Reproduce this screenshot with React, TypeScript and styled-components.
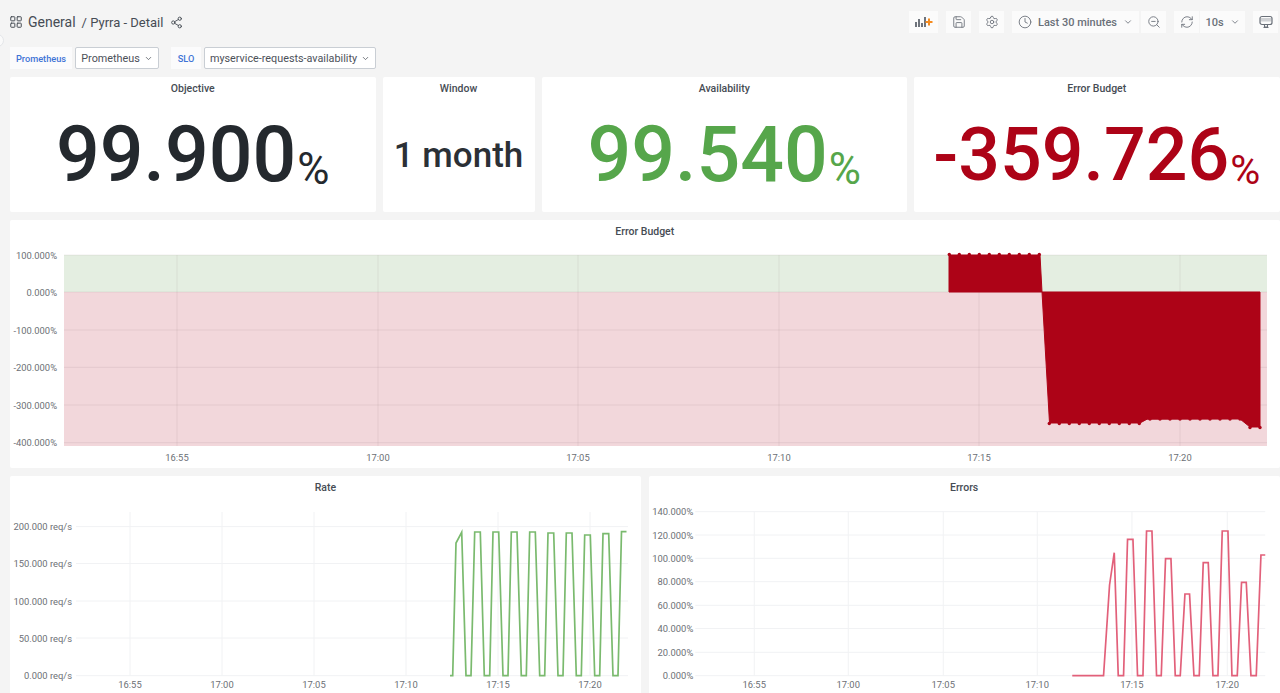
import React from "react";
import styled, { createGlobalStyle } from "styled-components";
import {
  ChevronDown,
  Clock,
  LayoutGrid,
  RefreshCw,
  Save,
  Settings,
  Share2,
  ZoomOut,
} from "lucide-react";

const GlobalStyle = createGlobalStyle`
  html, body {
    margin: 0;
    height: 100%;
    overflow: hidden;
    background: #f4f4f4;
    font-family: Roboto, "Liberation Sans", sans-serif;
  }
`;

const Page = styled.div`
  display: flex;
  flex-direction: column;
  height: 693px;
  padding: 0 0.5px 0 10px;
  overflow: hidden;
  box-sizing: border-box;
`;

const SideToggle = styled.div`
  position: absolute;
  left: -9px;
  top: 34px;
  width: 11px;
  height: 11px;
  border-radius: 50%;
  background: #fafafa;
  border: 1px solid #e4e6e9;
`;

const TopBar = styled.header`
  display: flex;
  align-items: center;
  justify-content: space-between;
  height: 44px;
  flex: none;
`;

const Breadcrumb = styled.div`
  display: flex;
  align-items: center;
  color: #464c54;
  font-size: 14px;
  margin-left: -1px;
  svg {
    display: block;
    color: #464c54;
  }
`;

const Crumb = styled.span<{ $gap: number; $size?: number }>`
  margin-left: ${(p) => p.$gap}px;
  font-size: ${(p) => p.$size ?? 14}px;
`;

const ToolGroups = styled.div`
  display: flex;
  align-items: center;
  gap: 8px;
  margin-right: 1.5px;
`;

const ToolGroup = styled.div`
  display: flex;
  gap: ${(p: { $gap?: number }) => p.$gap ?? 0}px;
`;

const ToolButton = styled.button<{ $width?: number }>`
  display: flex;
  align-items: center;
  justify-content: center;
  gap: 6px;
  width: ${(p) => p.$width ?? 25}px;
  height: 22px;
  padding: 0;
  border: 0;
  background: #fbfbfb;
  color: #6a7079;
  font: 500 11px Roboto, sans-serif;
`;

const VariableRow = styled.div`
  display: flex;
  align-items: center;
  height: 22px;
  margin-top: 3px;
  flex: none;
`;

const VariableLabel = styled.div<{ $width: number; $gap: number }>`
  display: flex;
  align-items: center;
  justify-content: center;
  width: ${(p) => p.$width}px;
  height: 22px;
  margin-left: ${(p) => p.$gap}px;
  margin-right: 3px;
  background: #fbfbfc;
  color: #3f74d6;
  font-size: 9.2px;
  font-weight: 500;
`;

const VariableSelect = styled.div<{ $width: number }>`
  display: flex;
  align-items: center;
  justify-content: center;
  gap: 4px;
  width: ${(p) => p.$width}px;
  height: 22px;
  box-sizing: border-box;
  background: #fff;
  border: 1px solid #c9ced4;
  border-radius: 2px;
  color: #4c5159;
  font-size: 10.8px;
  white-space: nowrap;
`;

const StatRow = styled.section`
  display: grid;
  grid-template-columns: 365.5px 152px 365.5px 365.5px;
  column-gap: 7px;
  height: 135px;
  margin-top: 8px;
  flex: none;
`;

const Panel = styled.div`
  display: flex;
  flex-direction: column;
  background: #fff;
  border-radius: 2px;
  overflow: hidden;
`;

const PanelTitle = styled.div`
  flex: none;
  height: 22px;
  padding-top: 1px;
  box-sizing: border-box;
  line-height: 22px;
  text-align: center;
  color: #464c54;
  font-size: 10.5px;
  font-weight: 500;
`;

const StatBody = styled.div`
  flex: 1;
  display: flex;
  align-items: center;
  justify-content: center;
  font-weight: 500;
  white-space: nowrap;
  color: ${(p: { $color: string }) => p.$color};
`;

const StatValue = styled.span`
  font-size: ${(p: { $size: number }) => p.$size}px;
  line-height: 1;
`;

const StatUnit = styled.span`
  font-size: ${(p: { $size: number }) => p.$size}px;
  font-weight: 400;
  margin-left: 1px;
  align-self: flex-end;
  margin-bottom: 21px;
  line-height: 1;
`;

const WideSlot = styled.section`
  height: 248px;
  margin-top: 8px;
  display: flex;
  flex-direction: column;
  flex: none;
`;

const WidePanel = styled(Panel)`
  flex: 1;
`;

const GraphRow = styled.section`
  display: grid;
  grid-template-columns: 1fr 1fr;
  column-gap: 8px;
  height: 240px;
  margin-top: 8px;
  flex: none;
`;

const ChartSvg = styled.svg`
  display: block;
  flex: 1;
  width: 100%;
  min-height: 0;
`;

const GridLine = styled.line<{ $dark?: boolean }>`
  stroke: ${(p) => (p.$dark ? "rgba(90,70,80,0.09)" : "#f1f2f4")};
  stroke-width: 1;
`;

const AxisLabel = styled.text`
  fill: #6c6f75;
  font-size: 9.4px;
  font-family: Roboto, sans-serif;
  dominant-baseline: central;
`;

type Tick = { at: number; label: string };

const times = ["16:55", "17:00", "17:05", "17:10", "17:15", "17:20"];

const toTicks = (xs: number[]): Tick[] =>
  xs.map((at, i) => ({ at, label: times[i] }));

const Axes = ({
  xTicks,
  yTicks,
  left,
  right,
  top,
  bottom,
  labelX,
  labelY,
  dark,
}: {
  xTicks: Tick[];
  yTicks: Tick[];
  left: number;
  right: number;
  top: number;
  bottom: number;
  labelX: number;
  labelY: number;
  dark?: boolean;
}) => (
  <>
    {yTicks.map((t) => (
      <GridLine key={t.label} $dark={dark} x1={left} x2={right} y1={t.at} y2={t.at} />
    ))}
    {xTicks.map((t) => (
      <GridLine key={t.label} $dark={dark} x1={t.at} x2={t.at} y1={top} y2={bottom} />
    ))}
    {yTicks.map((t) => (
      <AxisLabel key={t.label} x={labelX} y={t.at} textAnchor="end">
        {t.label}
      </AxisLabel>
    ))}
    {xTicks.map((t) => (
      <AxisLabel key={t.label} x={t.at} y={labelY} textAnchor="middle">
        {t.label}
      </AxisLabel>
    ))}
  </>
);

const RED = "#ad0317";

const budgetArea =
  "949,292 949,255 1040,255 1042,292 1049.5,423 1140,423 1147,419.2 1240,419 1250,427 1260,427 1260,292";

const range = (from: number, count: number, step = 10) =>
  Array.from({ length: count }, (_, i) => from + i * step);

const budgetDots: [number, number][] = [
  ...range(949.3, 10).map((x): [number, number] => [x, 254.4]),
  ...range(1049.3, 10).map((x): [number, number] => [x, 423.5]),
  ...range(1150, 10).map((x): [number, number] => [x, 419]),
  [1250, 427.5],
  [1260, 427.5],
];

const ErrorBudgetChart = () => (
  <ChartSvg viewBox="10 242 1269.5 226">
    <rect x={64} y={255} width={1203} height={37} fill="#e4eee1" />
    <rect x={64} y={292} width={1203} height={154} fill="#f2d7db" />
    <Axes
      dark
      xTicks={toTicks([177, 378, 578, 779, 979, 1180])}
      yTicks={[
        { at: 255, label: "100.000%" },
        { at: 292, label: "0.000%" },
        { at: 330, label: "-100.000%" },
        { at: 367.3, label: "-200.000%" },
        { at: 405, label: "-300.000%" },
        { at: 442.7, label: "-400.000%" },
      ]}
      left={64}
      right={1267}
      top={255}
      bottom={446}
      labelX={57}
      labelY={457}
    />
    <polygon points={budgetArea} fill={RED} stroke={RED} strokeWidth={1} />
    {budgetDots.map(([x, y]) => (
      <circle key={x} cx={x} cy={y} r={1.7} fill={RED} />
    ))}
  </ChartSvg>
);

const ZERO = 675.7;

// each pulse: [rise start, top start, top end, fall end, top y]
const ratePulses = [
  [471, 474.7, 480.3, 484.3, 532],
  [489.7, 493, 498.7, 503, 532],
  [508, 511.3, 517, 521.3, 532],
  [526.3, 529.7, 535.3, 539.7, 532],
  [544.7, 548, 553.7, 558, 533],
  [563, 566.3, 572, 576.3, 533],
  [581.3, 584.7, 590.3, 594.7, 535],
  [599.7, 603, 608.7, 613, 533.7],
];

const ratePoints = [
  `450,${ZERO} 452.7,${ZERO} 456,543 461.7,532.3 466,${ZERO}`,
  ...ratePulses.map(
    ([a, b, c, d, y]) => `${a},${ZERO} ${b},${y} ${c},${y} ${d},${ZERO}`
  ),
  `618,${ZERO} 621.5,531.7 626.5,531.7`,
].join(" ");

const RateChart = () => (
  <ChartSvg viewBox="10 498 630.75 218">
    <Axes
      xTicks={toTicks([130, 222, 314, 406, 498, 590])}
      yTicks={[
        { at: 526.6, label: "200.000 req/s" },
        { at: 563.5, label: "150.000 req/s" },
        { at: 601, label: "100.000 req/s" },
        { at: 638, label: "50.000 req/s" },
        { at: ZERO, label: "0.000 req/s" },
      ]}
      left={76}
      right={628}
      top={512}
      bottom={ZERO}
      labelX={72}
      labelY={684.6}
    />
    <polyline points={ratePoints} fill="none" stroke="#7aba6e" strokeWidth={1.7} />
  </ChartSvg>
);

const errorPoints = [
  [1072, ZERO],
  [1103.3, ZERO],
  [1109.3, 585],
  [1114, 552.7],
  [1118, ZERO],
  [1123.3, ZERO],
  [1127.3, 539.3],
  [1132.7, 539.3],
  [1137.3, ZERO],
  [1142.7, ZERO],
  [1146.3, 531],
  [1151.7, 531],
  [1156.3, ZERO],
  [1161, ZERO],
  [1165.3, 558.7],
  [1170.7, 558.7],
  [1175, ZERO],
  [1180, ZERO],
  [1184.7, 594],
  [1189.3, 594],
  [1193.7, ZERO],
  [1199, ZERO],
  [1203, 562.7],
  [1208, 562.7],
  [1212.7, ZERO],
  [1217.7, ZERO],
  [1222, 531],
  [1227.7, 531],
  [1231.7, ZERO],
  [1237, ZERO],
  [1241.3, 582.3],
  [1246, 582.3],
  [1250.7, ZERO],
  [1256, ZERO],
  [1260.7, 555],
  [1265, 555],
]
  .map((p) => p.join(","))
  .join(" ");

const ErrorsChart = () => (
  <ChartSvg viewBox="648.75 498 630.75 218">
    <Axes
      xTicks={toTicks([754, 848, 943, 1037, 1131.7, 1227])}
      yTicks={[
        { at: 511.7, label: "140.000%" },
        { at: 535, label: "120.000%" },
        { at: 558.3, label: "100.000%" },
        { at: 581.7, label: "80.000%" },
        { at: 605.3, label: "60.000%" },
        { at: 628.5, label: "40.000%" },
        { at: 652.3, label: "20.000%" },
        { at: ZERO, label: "0.000%" },
      ]}
      left={695}
      right={1265}
      top={511.7}
      bottom={ZERO}
      labelX={693}
      labelY={684.6}
    />
    <polyline points={errorPoints} fill="none" stroke="#e2607a" strokeWidth={1.7} />
  </ChartSvg>
);

const AddPanelIcon = () => (
  <svg width="18" height="10" viewBox="0 0 18 10">
    <path
      d="M1 5v5M4 2v8M7 6v4M10 0v10"
      stroke="#5f656e"
      strokeWidth="1.8"
      fill="none"
    />
    <path d="M14 1.5v7M10.5 5h7" stroke="#f58b1f" strokeWidth="2" fill="none" />
  </svg>
);

const MonitorIcon = () => (
  <svg width="14" height="14" viewBox="0 0 14 14" fill="none">
    <rect x="1" y="1.5" width="12" height="8" rx="2" stroke="#6a7079" strokeWidth="1.2" />
    <path d="M1.5 3h11v3.5h-11z" fill="#6a7079" opacity="0.3" />
    <path d="M5.5 9.5v2.5h3V9.5M4.5 12.5h5" stroke="#6a7079" strokeWidth="1.1" />
  </svg>
);

const Stat = ({
  title,
  value,
  unit,
  color,
  size,
  unitSize,
}: {
  title: string;
  value: string;
  unit?: string;
  color: string;
  size: number;
  unitSize?: number;
}) => (
  <Panel>
    <PanelTitle>{title}</PanelTitle>
    <StatBody $color={color}>
      <StatValue $size={size}>{value}</StatValue>
      {unit && <StatUnit $size={unitSize ?? 44}>{unit}</StatUnit>}
    </StatBody>
  </Panel>
);

export default function App() {
  return (
    <Page>
      <GlobalStyle />
      <SideToggle />
      <TopBar>
        <Breadcrumb>
          <LayoutGrid size={14} strokeWidth={1.7} />
          <Crumb $gap={5}>General</Crumb>
          <Crumb $gap={6} $size={13}>
            / Pyrra - Detail
          </Crumb>
          <Crumb $gap={7}>
            <Share2 size={13} strokeWidth={1.7} />
          </Crumb>
        </Breadcrumb>
        <ToolGroups>
          <ToolButton $width={29}>
            <AddPanelIcon />
          </ToolButton>
          <ToolButton>
            <Save size={14} strokeWidth={1.5} />
          </ToolButton>
          <ToolButton>
            <Settings size={14} strokeWidth={1.5} />
          </ToolButton>
          <ToolGroup $gap={2}>
            <ToolButton $width={127}>
              <Clock size={14} strokeWidth={1.5} />
              Last 30 minutes
              <ChevronDown size={10} />
            </ToolButton>
            <ToolButton>
              <ZoomOut size={14} strokeWidth={1.5} />
            </ToolButton>
          </ToolGroup>
          <ToolGroup $gap={1}>
            <ToolButton>
              <RefreshCw size={14} strokeWidth={1.5} />
            </ToolButton>
            <ToolButton $width={45}>
              10s
              <ChevronDown size={10} />
            </ToolButton>
          </ToolGroup>
          <ToolButton>
            <MonitorIcon />
          </ToolButton>
        </ToolGroups>
      </TopBar>

      <VariableRow>
        <VariableLabel $width={62} $gap={0}>
          Prometheus
        </VariableLabel>
        <VariableSelect $width={84}>
          Prometheus
          <ChevronDown size={9} />
        </VariableSelect>
        <VariableLabel $width={30} $gap={12}>
          SLO
        </VariableLabel>
        <VariableSelect $width={172}>
          myservice-requests-availability
          <ChevronDown size={9} />
        </VariableSelect>
      </VariableRow>

      <StatRow>
        <Stat title="Objective" value="99.900" unit="%" color="#24292e" size={77} />
        <Stat title="Window" value="1 month" color="#2b3036" size={35} />
        <Stat title="Availability" value="99.540" unit="%" color="#56a64b" size={77} />
        <Stat
          title="Error Budget"
          value="-359.726"
          unit="%"
          color="#ad0317"
          size={73.5}
          unitSize={41}
        />
      </StatRow>

      <WideSlot>
        <WidePanel>
          <PanelTitle>Error Budget</PanelTitle>
          <ErrorBudgetChart />
        </WidePanel>
      </WideSlot>

      <GraphRow>
        <Panel>
          <PanelTitle>Rate</PanelTitle>
          <RateChart />
        </Panel>
        <Panel>
          <PanelTitle>Errors</PanelTitle>
          <ErrorsChart />
        </Panel>
      </GraphRow>
    </Page>
  );
}
